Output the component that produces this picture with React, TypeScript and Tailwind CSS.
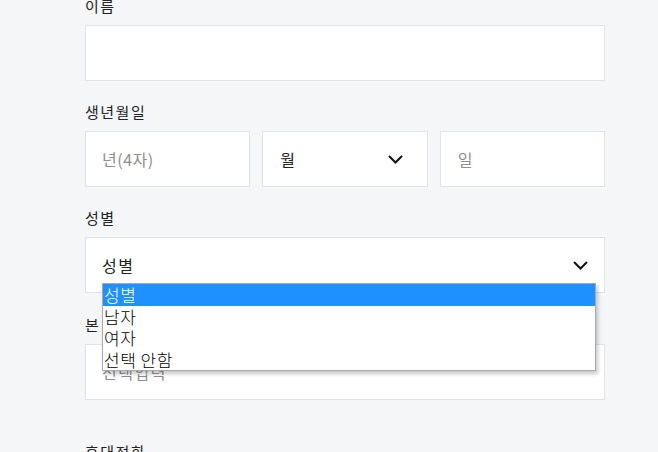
import React from 'react';

function Chevron() {
  return (
    <svg width="15" height="9" viewBox="0 0 15 9" className="shrink-0">
      <polyline points="1,1 7.5,7.5 14,1" fill="none" stroke="#111" strokeWidth="2" />
    </svg>
  );
}

function Label({ children, className = '' }: { children: React.ReactNode; className?: string }) {
  return (
    <div className={`h-[22px] text-[15px] leading-[22px] font-normal tracking-[1.5px] text-[#222] ${className}`}>
      {children}
    </div>
  );
}

function Box({ children, className = '' }: { children?: React.ReactNode; className?: string }) {
  return (
    <div
      className={`mt-[8px] flex h-[56px] items-center border border-[#e3e4e6] bg-white px-[16px] text-[16px] tracking-[1.5px] ${className}`}
    >
      {children}
    </div>
  );
}

const options = ['성별', '남자', '여자', '선택 안함'];

export default function App() {
  return (
    <div
      className="h-[452px] w-[658px] overflow-hidden bg-[#f5f6f7]"
      style={{ fontFamily: '"Noto Sans CJK KR", "Noto Sans", sans-serif' }}
    >
      <div className="ml-[85px] w-[520px] -mt-[5px]">
        <Label>이름</Label>
        <Box />

        <Label className="mt-[20px]">생년월일</Label>
        <div className="mt-[8px] grid grid-cols-3 gap-[12px]">
          <div className="flex h-[56px] items-center border border-[#e3e4e6] bg-white px-[16px] text-[16px] tracking-[0.5px] text-[#8e8e8e]">
            년(4자)
          </div>
          <div className="flex h-[56px] items-center justify-between border border-[#e3e4e6] bg-white pl-[17px] pr-[24px] text-[16px] text-[#222]">
            <span>월</span>
            <Chevron />
          </div>
          <div className="flex h-[56px] items-center border border-[#e3e4e6] bg-white px-[17px] text-[16px] text-[#8e8e8e]">
            일
          </div>
        </div>

        <Label className="mt-[20px]">성별</Label>
        <div className="relative">
          <Box className="justify-between border-[#46c27f] text-[#222]">
            <span>성별</span>
            <Chevron />
          </Box>
          <ul className="absolute left-[17px] top-[46px] z-10 w-[494px] border border-[#a9a9a9] bg-white shadow-[2px_3px_4px_rgba(0,0,0,0.22)]">
            {options.map((o, i) => (
              <li
                key={o}
                className={`h-[21.5px] pl-[1px] text-[17px] leading-[21.5px] font-light tracking-[0.5px] ${
                  i === 0 ? 'bg-[#1e90ff] text-white' : 'text-black'
                }`}
              >
                {o}
              </li>
            ))}
          </ul>
        </div>

        <Label className="mt-[21px] tracking-[2.5px]">본인 확인 이메일(선택)</Label>
        <Box className="text-[#8e8e8e]">선택입력</Box>

        <Label className="mt-[41px]">휴대전화</Label>
        <Box />
      </div>
    </div>
  );
}
